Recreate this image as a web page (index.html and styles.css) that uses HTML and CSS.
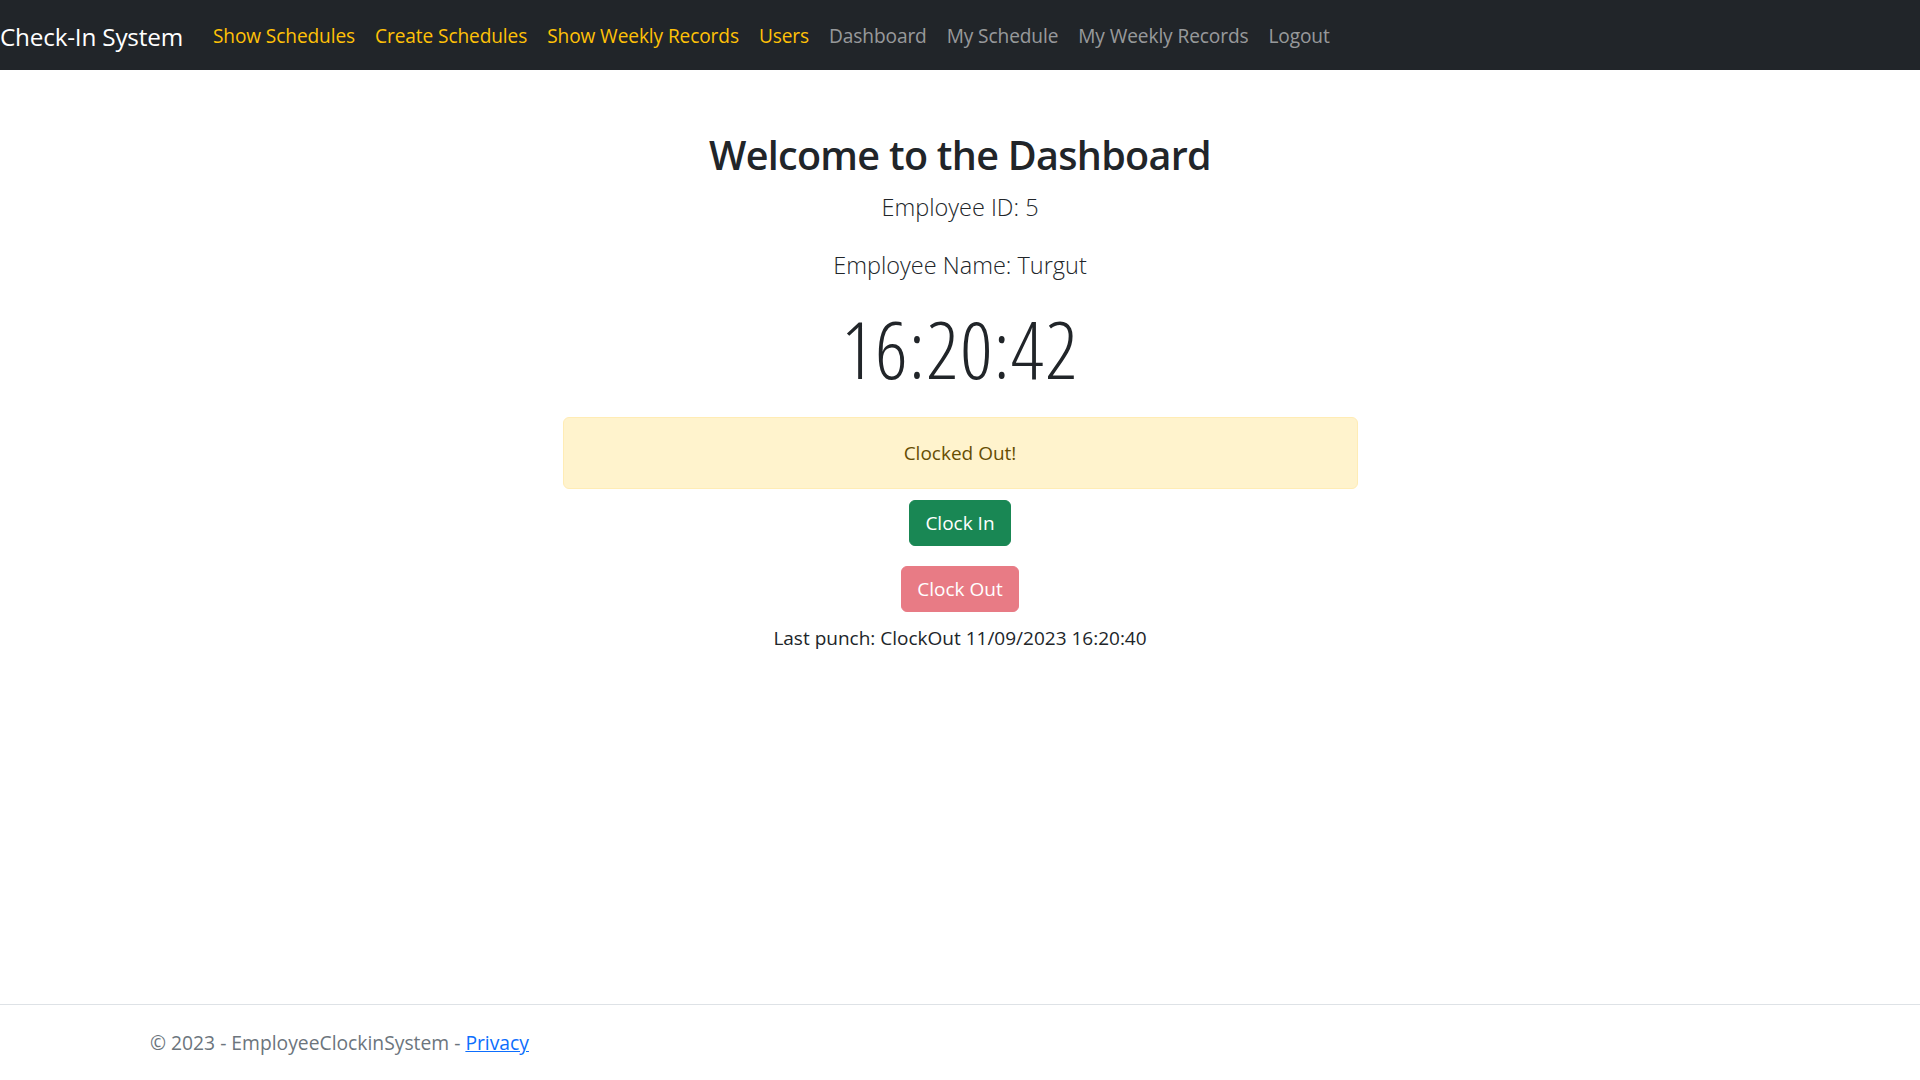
FILE: index.html
```html
<!DOCTYPE html>
<html lang="en">
<head>
<meta charset="utf-8">
<title>Dashboard - Check-In System</title>
<link rel="stylesheet" href="styles.css">
</head>
<body>
<header class="navbar">
  <a class="brand" href="#">Check-In System</a>
  <nav class="nav">
    <a class="nav-link warn" href="#">Show Schedules</a>
    <a class="nav-link warn" href="#">Create Schedules</a>
    <a class="nav-link warn" href="#">Show Weekly Records</a>
    <a class="nav-link warn" href="#">Users</a>
    <a class="nav-link" href="#">Dashboard</a>
    <a class="nav-link" href="#">My Schedule</a>
    <a class="nav-link" href="#">My Weekly Records</a>
    <a class="nav-link" href="#">Logout</a>
  </nav>
</header>
<main class="container">
  <div class="col">
    <h1 class="title">Welcome to the Dashboard</h1>
    <p class="lead lead-id">Employee ID: 5</p>
    <p class="lead lead-name">Employee Name: Turgut</p>
    <div class="clock">16:20:42</div>
    <div class="alert">Clocked Out!</div>
    <div class="btn-row first"><button class="btn btn-success">Clock In</button></div>
    <div class="btn-row second"><button class="btn btn-danger" disabled>Clock Out</button></div>
    <p class="last">Last punch: ClockOut 11/09/2023 16:20:40</p>
  </div>
</main>
<footer class="footer">
  <div class="footer-inner">&copy; 2023 - EmployeeClockinSystem - <a href="#">Privacy</a></div>
</footer>
</body>
</html>
```
FILE: styles.css
```css
* { box-sizing: border-box; }
html, body { height: 100%; }
body {
  margin: 0;
  font-family: "Open Sans", "Noto Sans", sans-serif;
  font-size: 20px;
  line-height: 1.5;
  color: #212529;
  background: #fff;
  display: flex;
  flex-direction: column;
  min-height: 100vh;
}
.navbar {
  height: 70px;
  background: #212529;
  display: flex;
  align-items: center;
  padding-top: 2px;
  flex-shrink: 0;
}
.brand {
  color: #fff;
  text-decoration: none;
  font-size: 24.3px;
  line-height: 37px;
  margin-right: 20px;
  letter-spacing: -0.2px;
}
.nav { display: flex; }
.nav-link {
  color: rgba(255,255,255,.55);
  text-decoration: none;
  font-size: 19.1px;
  padding: 0 10px;
  letter-spacing: -0.1px;
}
.nav-link.warn { color: #ffc107; }
.container {
  width: 1650px;
  margin: 0 auto;
  padding: 0 15px;
  flex: 1;
}
.col {
  width: 795px;
  margin: 0 auto;
  text-align: center;
}
.title {
  margin: 55px 0 4px;
  font-size: 39.5px;
  line-height: 60px;
  font-weight: 590;
  letter-spacing: -0.7px;
}
.lead {
  font-size: 23.5px;
  font-weight: 300;
  line-height: 37.5px;
  margin: 0;
}
.lead-id { margin-bottom: 20px; }
.lead-name { margin-bottom: 16px; }
.clock {
  font-size: 80px;
  line-height: 96px;
  font-weight: 300;
  font-stretch: 78%;
  letter-spacing: 1.3px;
  margin-bottom: 21px;
}
.alert {
  background: #fff3cd;
  border: 1.25px solid #ffecb5;
  color: #664d03;
  border-radius: 6px;
  padding: 20px;
  line-height: 30px;
  font-size: 19px;
}
.btn-row.first { margin-top: 11px; }
.btn-row.second { margin-top: 20px; }
.btn {
  font-family: inherit;
  font-size: 19px;
  line-height: 30px;
  padding: 7px 15px;
  border: 1px solid transparent;
  border-radius: 6px;
  color: #fff;
  cursor: pointer;
}
.btn-success { background: #198754; border-color: #198754; }
.btn-danger { background: #dc3545; border-color: #dc3545; opacity: .65; }
.last {
  margin: 11px 0 0;
  font-size: 19px;
  line-height: 30px;
}
.footer {
  border-top: 1px solid #dee2e6;
  height: 76px;
  line-height: 75px;
  color: #6c757d;
  flex-shrink: 0;
}
.footer-inner {
  width: 1650px;
  margin: 0 auto;
  padding: 0 15px;
  font-size: 19.3px;
}
.footer a { color: #0d6efd; text-decoration: underline; }
```
